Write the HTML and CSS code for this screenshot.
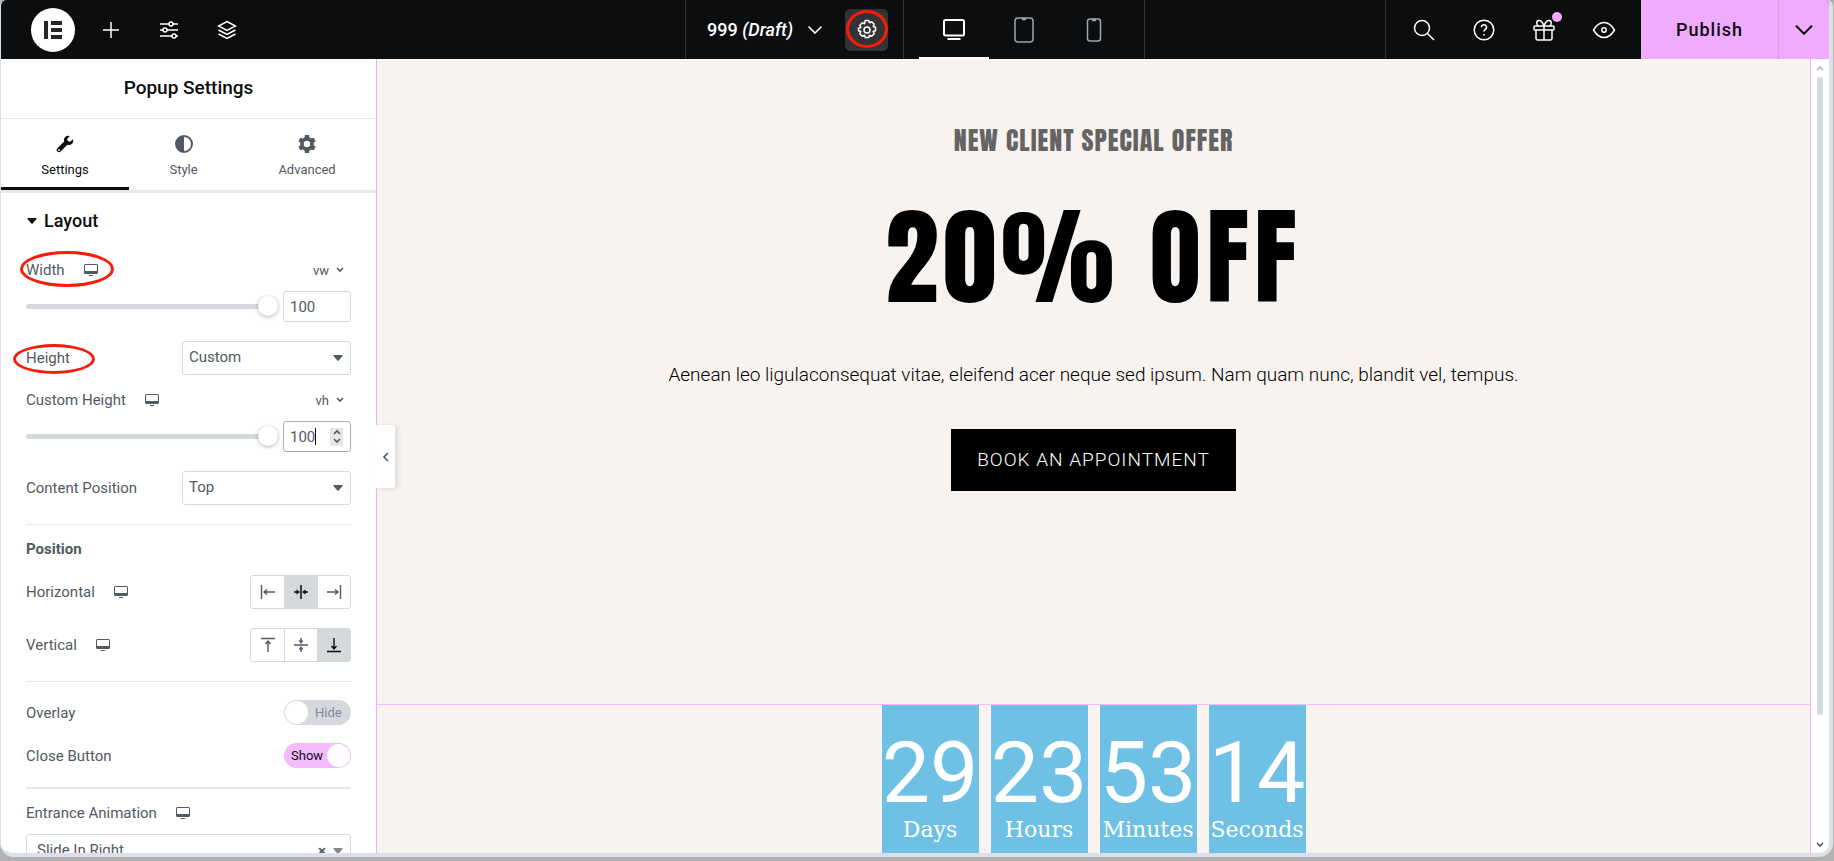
FILE: index.html
```html
<!DOCTYPE html>
<html lang="en">
<head>
    <meta charset="UTF-8">
    <meta name="viewport" content="width=device-width, initial-scale=1.0">
    <title>Popup Settings</title>
    <link rel="stylesheet" href="styles.css">
</head>
<body>
    <!-- shared icons -->
    <svg class="sprite" aria-hidden="true">
        <symbol id="desktop" viewBox="0 0 14 12">
            <path d="M1.500 0h11A1.500 1.500 0 0 1 14 1.500v7a1.500 1.500 0 0 1-1.500 1.500h-11A1.500 1.500 0 0 1 0 8.500v-7A1.500 1.500 0 0 1 1.500 0zM1 1v6h12V1zM5 11h4v1H5z" fill="currentColor" fill-rule="evenodd"/>
        </symbol>
        <symbol id="chevron" viewBox="0 0 14 8">
            <path d="M1 1l6 6 6-6" fill="none" stroke="currentColor" stroke-width="1.600" stroke-linecap="round"/>
        </symbol>
        <symbol id="chevron-small" viewBox="0 0 8 6">
            <path d="M1 1l3 3 3-3" fill="none" stroke="currentColor" stroke-width="1.600"/>
        </symbol>
        <symbol id="caret-down" viewBox="0 0 10 6">
            <path d="M1 0h8q1 .4.500 1L5.700 5.600q-.7.500-1.400 0L.500 1Q0 .4 1 0z" fill="currentColor"/>
        </symbol>
        <symbol id="align-start" viewBox="0 0 16 16">
            <path d="M1.500 1v14M4 8h11M7 5.500L4 8l3 2.500" fill="none" stroke="currentColor" stroke-width="1.400"/>
        </symbol>
        <symbol id="align-middle" viewBox="0 0 16 16">
            <path d="M8 1v14M1 8h4M15 8h-4" fill="none" stroke="currentColor" stroke-width="1.500"/>
            <path d="M3.500 5.500L7 8l-3.500 2.500zM12.500 5.500L9 8l3.500 2.500z" fill="currentColor"/>
        </symbol>
    </svg>

    <div class="window">
        <header class="topbar">
            <div class="topbar-left">
                <button class="logo" aria-label="Menu">
                    <svg width="20" height="20" viewBox="0 0 20 20"><path d="M1 1h4v18H1zM8 1h11v4H8zM8 8h11v4H8zM8 15h11v4H8z" fill="#232629"/></svg>
                </button>
                <button class="icon-button" aria-label="Add element">
                    <svg width="20" height="20" viewBox="0 0 20 20"><path d="M10 2v16M2 10h16"/></svg>
                </button>
                <button class="icon-button" aria-label="Site settings">
                    <svg width="20" height="20" viewBox="0 0 20 20"><path d="M1 4h9M14 4h5M1 10h3M8 10h11M1 16h12M17 16h2"/><circle cx="12" cy="4" r="2"/><circle cx="6" cy="10" r="2"/><circle cx="15" cy="16" r="2"/></svg>
                </button>
                <button class="icon-button" aria-label="Structure">
                    <svg width="20" height="20" viewBox="0 0 20 20"><path d="M10 1.500l8.500 4.500-8.500 4.500L1.500 6zM1.500 10l8.500 4.500 8.500-4.500M1.500 14l8.500 4.500 8.500-4.500"/></svg>
                </button>
            </div>

            <div class="topbar-center">
                <div class="document">
                    <button class="document-name">
                        <span>999 <i>(Draft)</i></span>
                        <svg width="14" height="8"><use href="#chevron"/></svg>
                    </button>
                    <button class="document-settings" aria-label="Document settings">
                        <svg width="22" height="22" viewBox="0 0 22 22"><path d="M9.300 1.500h3.400l.8 2.300 2.200-1 2.500 2.500-1 2.200 2.300.8v3.400l-2.300.8 1 2.200-2.500 2.500-2.200-1-.8 2.300H9.300l-.8-2.300-2.200 1-2.500-2.500 1-2.200-2.300-.8V9.300l2.300-.8-1-2.200 2.500-2.500 2.200 1z" stroke-linejoin="round"/><circle cx="11" cy="11" r="3"/></svg>
                        <span class="mark mark-gear"></span>
                    </button>
                </div>
                <div class="devices">
                    <button class="device active" aria-label="Desktop">
                        <svg width="24" height="24" viewBox="0 0 24 24"><rect x="2" y="2" width="20" height="15.500" rx="1.500" stroke-width="2"/><path d="M5.500 21h13" stroke-width="2"/></svg>
                    </button>
                    <button class="device" aria-label="Tablet">
                        <svg width="20" height="26" viewBox="0 0 20 26"><rect x="1" y="1" width="18" height="24" rx="3"/><path d="M8 2h4" stroke-width="2.500"/></svg>
                    </button>
                    <button class="device" aria-label="Mobile">
                        <svg width="16" height="24" viewBox="0 0 16 24"><rect x="1.500" y="1" width="13" height="22" rx="2.500"/><path d="M6 2h4" stroke-width="2.500"/></svg>
                    </button>
                </div>
            </div>

            <div class="topbar-right">
                <div class="tools">
                    <button class="icon-button" aria-label="Finder">
                        <svg width="22" height="22" viewBox="0 0 22 22"><circle cx="9" cy="9" r="7.500"/><path d="M14.500 14.500L21 21"/></svg>
                    </button>
                    <button class="icon-button" aria-label="Help">
                        <svg width="22" height="22" viewBox="0 0 22 22"><circle cx="11" cy="11" r="9.800"/><path d="M8.500 8.300a2.500 2.500 0 1 1 3.600 2.200q-1.100.6-1.100 2M11 15v1.600"/></svg>
                    </button>
                    <button class="icon-button" aria-label="What's new">
                        <svg width="22" height="22" viewBox="0 0 22 22"><rect x="1" y="7" width="20" height="4" rx="1"/><path d="M3 11v8q0 2 2 2h12q2 0 2-2v-8M11 7v14M11 7Q9 1.500 6 1.500T4 5q0 2 2 2M11 7q2-5.500 5-5.500T18 5q0 2-2 2"/></svg>
                        <span class="dot"></span>
                    </button>
                    <button class="icon-button" aria-label="Preview">
                        <svg width="24" height="20" viewBox="0 0 24 20"><path d="M1.500 10Q6 2.500 12 2.500T22.500 10Q18 17.500 12 17.500T1.500 10z"/><circle cx="12" cy="10" r="2.200"/></svg>
                    </button>
                </div>
                <button class="publish">Publish</button>
                <button class="publish-more" aria-label="Save options">
                    <svg width="18" height="10"><use href="#chevron"/></svg>
                </button>
            </div>
        </header>

        <div class="editor">
            <aside class="panel">
                <h1 class="panel-title">Popup Settings</h1>
                <nav class="tabs">
                    <button class="tab active">
                        <svg width="18" height="18" viewBox="0 0 18 18"><path d="M17 4.200l-2.800 2.500-2.400-.6-.6-2.300L13.800 1Q11 .2 9.200 2T8.200 6.500L1.400 13.300a2.200 2.200 0 0 0 3.200 3.200L11.400 9.700q2.700.9 4.500-.9T17 4.200zM3 15.900a.9.900 0 1 1 0-1.800.9.900 0 0 1 0 1.800z" fill="currentColor" fill-rule="evenodd"/></svg>
                        Settings
                    </button>
                    <button class="tab">
                        <svg width="18" height="18" viewBox="0 0 18 18"><circle cx="9" cy="9" r="8" fill="none" stroke="currentColor" stroke-width="2"/><path d="M9 1a8 8 0 0 0 0 16z" fill="currentColor"/></svg>
                        Style
                    </button>
                    <button class="tab">
                        <svg width="18" height="18" viewBox="0 0 18 18"><path d="M7 0h4l.5 2.500 1.700 1 2.500-.8 1.900 3.300-1.900 1.900v2.200l1.900 1.900-1.900 3.300-2.500-.8-1.700 1L11 18H7l-.5-2.500-1.700-1-2.500.8L.4 12l1.900-1.900V7.900L.4 6l1.900-3.300 2.500.8 1.700-1zM9 5.800a3.200 3.200 0 1 0 0 6.400 3.200 3.200 0 0 0 0-6.400z" fill="currentColor" fill-rule="evenodd"/></svg>
                        Advanced
                    </button>
                </nav>

                <div class="controls">
                    <h2 class="section-title">
                        <svg width="10" height="6"><use href="#caret-down"/></svg>
                        Layout
                    </h2>

                    <div class="control-stack">
                        <div class="control-head">
                            <label class="marked" for="width">Width<span class="mark mark-width"></span></label>
                            <svg width="14" height="12"><use href="#desktop"/></svg>
                            <button class="unit">vw <svg width="8" height="6"><use href="#chevron-small"/></svg></button>
                        </div>
                        <div class="slider">
                            <input type="range" min="0" max="100" value="100" aria-label="Width slider">
                            <span class="number"><input type="text" id="width" value="100"></span>
                        </div>
                    </div>

                    <div class="control-row">
                        <label class="marked" for="height">Height<span class="mark mark-height"></span></label>
                        <span class="select">
                            <select id="height"><option>Custom</option><option>Fit To Content</option></select>
                            <svg width="10" height="6"><use href="#caret-down"/></svg>
                        </span>
                    </div>

                    <div class="control-stack">
                        <div class="control-head">
                            <label for="customHeight">Custom Height</label>
                            <svg width="14" height="12"><use href="#desktop"/></svg>
                            <button class="unit">vh <svg width="8" height="6"><use href="#chevron-small"/></svg></button>
                        </div>
                        <div class="slider">
                            <input type="range" min="0" max="100" value="100" aria-label="Custom height slider">
                            <span class="number focused">
                                <input type="text" id="customHeight" value="100">
                                <span class="text-caret"></span>
                                <span class="spinner">
                                    <button aria-label="Increase"><svg class="flip" width="8" height="6"><use href="#chevron-small"/></svg></button>
                                    <button aria-label="Decrease"><svg width="8" height="6"><use href="#chevron-small"/></svg></button>
                                </span>
                            </span>
                        </div>
                    </div>

                    <div class="control-row">
                        <label for="contentPosition">Content Position</label>
                        <span class="select">
                            <select id="contentPosition"><option>Top</option><option>Center</option><option>Bottom</option></select>
                            <svg width="10" height="6"><use href="#caret-down"/></svg>
                        </span>
                    </div>

                    <div class="group">
                        <h3>Position</h3>
                        <div class="control-row">
                            <span class="label">Horizontal</span>
                            <svg width="14" height="12"><use href="#desktop"/></svg>
                            <div class="choices">
                                <button aria-label="Left"><svg width="16" height="16"><use href="#align-start"/></svg></button>
                                <button class="active" aria-label="Center"><svg width="16" height="16"><use href="#align-middle"/></svg></button>
                                <button aria-label="Right"><svg class="flip" width="16" height="16"><use href="#align-start"/></svg></button>
                            </div>
                        </div>
                        <div class="control-row">
                            <span class="label">Vertical</span>
                            <svg width="14" height="12"><use href="#desktop"/></svg>
                            <div class="choices">
                                <button aria-label="Top"><svg class="turn" width="16" height="16"><use href="#align-start"/></svg></button>
                                <button aria-label="Middle"><svg class="turn" width="16" height="16"><use href="#align-middle"/></svg></button>
                                <button class="active" aria-label="Bottom"><svg class="turn-back" width="16" height="16"><use href="#align-start"/></svg></button>
                            </div>
                        </div>
                    </div>

                    <div class="group group-switches">
                        <div class="control-row">
                            <label for="overlay">Overlay</label>
                            <label class="switch"><input type="checkbox" id="overlay"><span>Hide</span></label>
                        </div>
                        <div class="control-row">
                            <label for="closeButton">Close Button</label>
                            <label class="switch"><input type="checkbox" id="closeButton" checked><span>Show</span></label>
                        </div>
                    </div>

                    <div class="group group-thick">
                        <div class="control-head">
                            <label for="animation">Entrance Animation</label>
                            <svg width="14" height="12"><use href="#desktop"/></svg>
                        </div>
                        <span class="select select-wide">
                            <select id="animation"><option>Slide In Right</option></select>
                            <button class="clear" aria-label="Clear">×</button>
                            <svg width="10" height="6"><use href="#caret-down"/></svg>
                        </span>
                    </div>
                </div>

                <button class="collapse" aria-label="Hide panel">
                    <svg width="6" height="10" viewBox="0 0 6 10"><path d="M5 1L1 5l4 4" fill="none" stroke="currentColor" stroke-width="1.600"/></svg>
                </button>
            </aside>

            <main class="preview">
                <section class="offer">
                    <h3>NEW CLIENT SPECIAL OFFER</h3>
                    <h2>20% OFF</h2>
                    <p>Aenean leo ligulaconsequat vitae, eleifend acer neque sed ipsum. Nam quam nunc, blandit vel, tempus.</p>
                    <a class="book" href="#">BOOK AN APPOINTMENT</a>
                </section>
                <section class="countdown">
                    <div class="count"><span class="digits">29</span><span class="count-label">Days</span></div>
                    <div class="count"><span class="digits">23</span><span class="count-label">Hours</span></div>
                    <div class="count"><span class="digits">53</span><span class="count-label">Minutes</span></div>
                    <div class="count"><span class="digits">14</span><span class="count-label">Seconds</span></div>
                </section>
            </main>

            <div class="scrollbar">
                <svg class="flip faded" width="8" height="6"><use href="#chevron-small"/></svg>
                <div class="scroll-track"><div class="scroll-thumb"></div></div>
                <svg width="8" height="6"><use href="#chevron-small"/></svg>
            </div>
        </div>
    </div>
</body>
</html>
```
FILE: styles.css
```css
* {
    box-sizing: border-box;
}
body {
    margin: 0;
    height: 100vh;
    padding: 0 1px 4px 0;
    background: #b4b2b1;
    font-family: Roboto, sans-serif;
    font-size: 15px;
    color: #515962;
    overflow: hidden;
}
button {
    display: flex;
    align-items: center;
    justify-content: center;
    padding: 0;
    border: 0;
    background: none;
    color: inherit;
    font: inherit;
    cursor: pointer;
}
svg {
    display: block;
    flex: none;
}
h1, h2, h3, p {
    margin: 0;
}
.sprite {
    position: absolute;
    width: 0;
    height: 0;
}
.flip {
    transform: rotate(180deg);
}
.turn {
    transform: rotate(90deg);
}
.turn-back {
    transform: rotate(-90deg);
}
.window {
    display: flex;
    flex-direction: column;
    height: 100%;
    border: solid #d8e1e9;
    border-width: 0 4px 4px 1px;
    border-radius: 6px 6px 14px 14px;
    background: #fff;
    overflow: hidden;
}

/* top bar */
.topbar {
    display: flex;
    flex: none;
    height: 59px;
    background: #0c0d0e;
    color: #fff;
}
.topbar svg {
    fill: none;
    stroke: currentColor;
    stroke-width: 1.5;
}
.topbar-left, .topbar-right {
    flex: 1;
    display: flex;
}
.topbar-left {
    align-items: center;
}
.logo {
    width: 44px;
    height: 44px;
    margin: 0 7px 0 30px;
    border-radius: 50%;
    background: #fff;
}
.topbar .logo svg {
    stroke: none;
}
.icon-button {
    position: relative;
    width: 58px;
    height: 100%;
}
.topbar-center {
    display: flex;
    border: solid #313335;
    border-width: 0 1px;
}
.document {
    display: flex;
    align-items: center;
    gap: 23px;
    padding: 0 15px 0 21px;
    border-right: 1px solid #313335;
}
.document-name {
    gap: 15px;
    font-size: 18px;
    font-weight: 500;
}
.document-settings {
    position: relative;
    width: 43px;
    height: 42px;
    border-radius: 5px;
    background: #313335;
}
.devices {
    display: flex;
    padding: 0 15px;
}
.device {
    width: 70px;
    color: #9da5ae;
}
.device.active {
    color: #fff;
    box-shadow: inset 0 -2px #fff;
}
.topbar-right {
    justify-content: flex-end;
}
.tools {
    display: flex;
    padding: 0 7px 0 8px;
    border-left: 1px solid #313335;
}
.tools .icon-button {
    width: 60px;
}
.dot {
    position: absolute;
    top: 12px;
    right: 12px;
    width: 10px;
    height: 10px;
    border-radius: 50%;
    background: #f0abfc;
}
.publish, .publish-more {
    background: #f0abfc;
    color: #0c0d0e;
}
.publish {
    width: 137px;
    font-size: 18px;
    font-weight: 500;
    letter-spacing: 1px;
}
.publish-more {
    width: 51px;
    border-left: 1px solid #eb8efb;
}

/* hand-drawn marks */
.mark {
    position: absolute;
    border: 3px solid #fb1b0b;
    border-radius: 50%;
    pointer-events: none;
}
.mark-gear {
    inset: 1px 0 3px 1px;
}
.marked {
    position: relative;
}
.mark-width {
    top: -10px;
    left: -6px;
    width: 94px;
    height: 36px;
}
.mark-height {
    top: -5px;
    left: -13px;
    width: 82px;
    height: 30px;
}

/* settings panel */
.editor {
    flex: 1;
    min-height: 0;
    display: flex;
}
.panel {
    position: relative;
    z-index: 1;
    display: flex;
    flex-direction: column;
    width: 376px;
    flex: none;
    border-right: 1px solid #f0abfc;
    background: #fff;
}
.panel-title {
    padding: 18px 0 19px;
    border-bottom: 1px solid #e6e8ea;
    color: #0c0d0e;
    font-size: 19px;
    font-weight: 500;
    line-height: 22px;
    text-align: center;
}
.tabs {
    display: flex;
    flex: none;
    border-bottom: 3px solid #e6e8ea;
}
.tab {
    flex: 1 1 auto;
    flex-direction: column;
    gap: 9px;
    height: 71px;
    padding: 4px 10px 0;
    font-size: 13px;
    line-height: 16px;
}
.tab.active {
    color: #0c0d0e;
    box-shadow: inset 0 -3px #0c0d0e;
}
.controls {
    flex: 1;
    min-height: 0;
    padding: 0 25px;
    overflow: hidden;
}
.section-title {
    display: flex;
    align-items: center;
    gap: 7px;
    padding: 18px 0 14px 1px;
    color: #0c0d0e;
    font-size: 18px;
    font-weight: 500;
    line-height: 20px;
}
.control-stack {
    margin-top: 16px;
}
.control-head {
    display: flex;
    align-items: center;
    gap: 19px;
    height: 18px;
    margin-bottom: 12px;
}
.unit {
    gap: 7px;
    margin-left: auto;
    padding-right: 7px;
    font-size: 13px;
}
.slider {
    display: flex;
    align-items: center;
    gap: 5px;
}
.slider input[type="range"] {
    flex: 1;
    min-width: 0;
    height: 20px;
    margin: 0;
    appearance: none;
    background: none;
}
.slider input[type="range"]::-webkit-slider-runnable-track {
    height: 5px;
    border-radius: 3px;
    background: #d5d8dc;
}
.slider input[type="range"]::-webkit-slider-thumb {
    appearance: none;
    width: 20px;
    height: 20px;
    margin-top: -8px;
    border-radius: 50%;
    background: #fff;
    box-shadow: 0 1px 4px rgba(0, 0, 0, 0.3);
}
.number {
    position: relative;
    display: flex;
    align-items: center;
    width: 68px;
    height: 31px;
    padding: 0 7px 0 6px;
    border: 1px solid #d5d8dc;
    border-radius: 3px;
}
.number.focused {
    border-color: #a4afb7;
}
.number input {
    flex: 1;
    min-width: 0;
    padding: 0;
    border: 0;
    outline: 0;
    background: none;
    color: inherit;
    font-family: inherit;
    font-size: 15px;
}
.text-caret {
    position: absolute;
    left: 31px;
    width: 1px;
    height: 17px;
    background: #0c0d0e;
}
.spinner {
    display: flex;
    flex-direction: column;
    background: #e6e6e6;
}
.spinner button {
    width: 13px;
    height: 9px;
}
.control-row {
    display: flex;
    align-items: center;
    gap: 19px;
    margin-top: 19px;
}
.select {
    position: relative;
    display: flex;
    align-items: center;
    width: 169px;
    margin-left: auto;
}
.select select {
    width: 100%;
    height: 34px;
    padding: 0 6px 2px;
    border: 1px solid #d5d8dc;
    border-radius: 3px;
    appearance: none;
    background: #fff;
    color: inherit;
    font-family: inherit;
    font-size: 15px;
}
.select svg {
    position: absolute;
    right: 8px;
    pointer-events: none;
}
.select-wide {
    width: 100%;
}
.select-wide select {
    padding-left: 10px;
}
.select-wide svg {
    color: #8a8a8a;
}
.clear {
    position: absolute;
    right: 25px;
    font-weight: 700;
}
.group {
    margin-top: 19px;
    border-top: 1px solid #e6e8ea;
}
.group h3 {
    margin: 15px 0 -2px;
    font-size: 15px;
    font-weight: 700;
    line-height: 18px;
}
.group-switches .control-row {
    margin-top: 18px;
}
.group-thick {
    border-top-width: 2px;
}
.group-thick .control-head {
    margin-top: 15px;
}
.choices {
    display: flex;
    margin-left: auto;
    border: 1px solid #d5d8dc;
    border-radius: 3px;
}
.choices button {
    width: 33px;
    height: 32px;
}
.choices button + button {
    border-left: 1px solid #d5d8dc;
}
.choices .active {
    background: #d5d8dc;
    color: #0c0d0e;
}
.switch {
    display: grid;
    align-items: center;
    width: 67px;
    height: 25px;
    margin-left: auto;
    font-size: 13px;
}
.switch input, .switch span {
    grid-area: 1 / 1;
}
.switch input {
    display: flex;
    width: 100%;
    height: 100%;
    margin: 0;
    padding: 1px;
    border-radius: 13px;
    appearance: none;
    background: #d5d8dc;
}
.switch input::before {
    content: "";
    width: 23px;
    height: 23px;
    border-radius: 50%;
    background: #fff;
}
.switch input:checked {
    justify-content: flex-end;
    background: #f3bafd;
}
.switch span {
    padding-left: 31px;
    color: #818a96;
}
.switch input:checked + span {
    padding-left: 7px;
    color: #0c0d0e;
}
.collapse {
    position: absolute;
    top: 366px;
    left: 375px;
    width: 19px;
    height: 63px;
    border-radius: 0 3px 3px 0;
    background: #fff;
    box-shadow: 3px 1px 5px rgba(0, 0, 0, 0.1);
}

/* page preview */
.preview {
    flex: 1;
    min-width: 0;
    display: flex;
    flex-direction: column;
    border-right: 1px solid #f0abfc;
    background: #f8f3ef;
    overflow: hidden;
}
.offer {
    display: flex;
    flex-direction: column;
    align-items: center;
    padding: 60px 20px 213px;
    border-bottom: 1px solid #f3bafd;
    color: #000;
    text-align: center;
}
.offer h2, .offer h3 {
    font-family: Anton, Impact, sans-serif;
    font-weight: 400;
}
.offer h3 {
    color: #646464;
    font-size: 26px;
    letter-spacing: 1px;
    line-height: 42px;
}
.offer h2 {
    margin-top: 26px;
    font-size: 107px;
    letter-spacing: 5px;
    line-height: 140px;
}
.offer p {
    margin-top: 34px;
    font-size: 19px;
    font-weight: 300;
    line-height: 28px;
}
.book {
    margin-top: 40px;
    padding: 0 26px;
    background: #000;
    color: #fff;
    font-size: 19px;
    font-weight: 300;
    letter-spacing: 1px;
    line-height: 62px;
    text-decoration: none;
}
.countdown {
    flex: 1;
    display: flex;
    justify-content: center;
    gap: 12px;
}
.count {
    display: flex;
    flex-direction: column;
    align-items: center;
    width: 97px;
    padding-top: 25px;
    background: #6ec1e4;
    color: #fff;
}
.digits {
    font-size: 86px;
    line-height: 86px;
}
.count-label {
    font-family: "Roboto Slab", "DejaVu Serif", serif;
    font-size: 22px;
    line-height: 28px;
}
.scrollbar {
    display: flex;
    flex-direction: column;
    align-items: center;
    width: 18px;
    padding: 6px 0 5px;
    background: #fff;
}
.scroll-track {
    flex: 1;
    margin: 6px 0;
}
.scroll-thumb {
    width: 6px;
    height: 84%;
    border-radius: 3px;
    background: #d0dae3;
}
.faded {
    color: #b4b4b4;
}
```
